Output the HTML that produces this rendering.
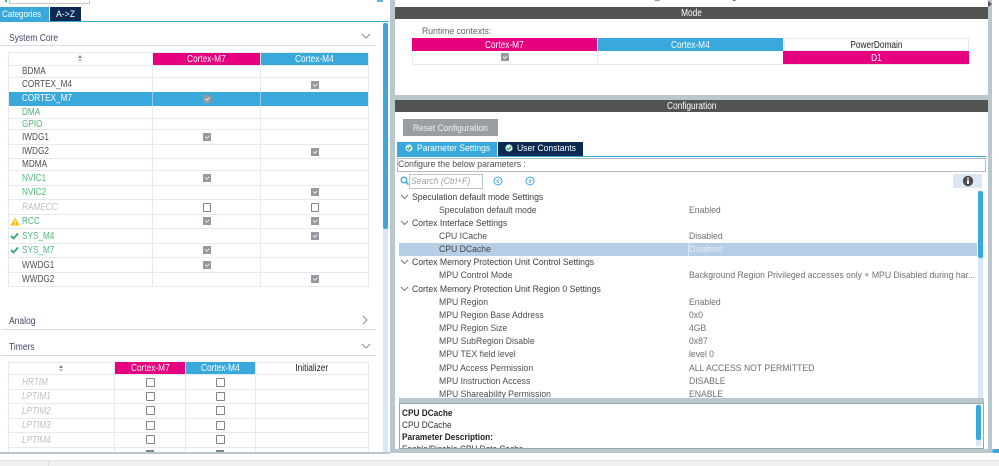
<!DOCTYPE html>
<html><head><meta charset="utf-8"><style>
html,body{margin:0;padding:0;background:#fff}
#p{position:relative;width:999px;height:466px;overflow:hidden;background:#fff;font-family:"Liberation Sans",sans-serif;font-size:10px;color:#555;filter:blur(.35px)}
#p div{position:absolute;white-space:nowrap}
.l{font-size:10px;line-height:14px;height:14px;left:22px;color:#505050;transform:scaleX(.82);transform-origin:0 50%}
.g{color:#52b878}.d{color:#bcc0c6;font-style:italic}
.hl{height:1px;background:#e4eaef}
.vl{width:1px;background:#e4eaef}
.h{color:#fff;text-align:center;font-size:10px;line-height:14px;overflow:visible}
.h span{display:inline-block;transform:scaleX(.83)}
.c{width:8px;height:8px;background:#95999e}
.c:after{content:"";position:absolute;left:2px;top:1.5px;width:3px;height:1.6px;border:solid #e8e8e8;border-width:0 0 1.2px 1.2px;transform:rotate(-45deg)}
.u{width:6.5px;height:6.5px;border:1px solid #808488;border-radius:1px;background:#fff}
.s{font-size:9.5px;line-height:14px;color:#4e4e4e;transform:scaleX(.91);transform-origin:0 50%}
.t{color:#3c4044;left:412px}.k{left:439px}.v{left:689px;color:#707070}
.sec{font-size:10px;line-height:14px;color:#434a6c;left:9px;transform:scaleX(.85);transform-origin:0 50%}
.rule{left:1px;width:375px;height:1px;background:#d5dbe0}
</style></head><body><div id="p">

<div style="left:5px;top:0;width:2px;height:2px;background:#39a9dc"></div>
<div style="left:9px;top:-3px;width:79px;height:5px;border:1px solid #c8c8c8"></div>
<div style="left:377px;top:0;width:6px;height:2px;background:#6aaedb"></div>
<div style="left:0;top:7px;width:49px;height:14px;background:#39a9dc"></div>
<div class="s" style="left:2px;top:8px;color:#fff;transform:scaleX(.85)">Categories</div>
<div style="left:50px;top:7px;width:31px;height:14px;background:#0b2a52"></div>
<div class="s" style="left:56px;top:8px;color:#fff">A-&gt;Z</div>
<div style="left:0;top:21px;width:389px;height:1px;background:#39a9dc"></div>

<div style="left:383px;top:23px;width:5px;height:429px;background:#d9e8f6"></div>
<div style="left:383px;top:23px;width:5px;height:206px;background:#39a9dc;border-radius:2px"></div>

<div class="sec" style="top:32px">System Core</div>
<div class="rule" style="top:45px"></div>
<svg style="position:absolute;left:361px;top:33px" width="10" height="6"><path d="M1 1L5 5L9 1" fill="none" stroke="#8a8f94"/></svg>

<div class="vl" style="left:8px;top:53px;height:234px"></div>
<div class="vl" style="left:152px;top:53px;height:234px"></div>
<div class="vl" style="left:260px;top:53px;height:234px"></div>
<div class="vl" style="left:368px;top:53px;height:234px"></div>
<div class="hl" style="left:8px;top:52px;width:361px"></div>
<div class="hl" style="left:8px;top:65px;width:361px"></div>
<div class="hl" style="left:8px;top:77px;width:361px"></div>
<div class="hl" style="left:8px;top:105px;width:361px"></div>
<div class="hl" style="left:8px;top:118px;width:361px"></div>
<div class="hl" style="left:8px;top:129px;width:361px"></div>
<div class="hl" style="left:8px;top:144px;width:361px"></div>
<div class="hl" style="left:8px;top:158px;width:361px"></div>
<div class="hl" style="left:8px;top:170px;width:361px"></div>
<div class="hl" style="left:8px;top:185px;width:361px"></div>
<div class="hl" style="left:8px;top:199px;width:361px"></div>
<div class="hl" style="left:8px;top:214px;width:361px"></div>
<div class="hl" style="left:8px;top:228px;width:361px"></div>
<div class="hl" style="left:8px;top:243px;width:361px"></div>
<div class="hl" style="left:8px;top:257px;width:361px"></div>
<div class="hl" style="left:8px;top:272px;width:361px"></div>
<div class="hl" style="left:8px;top:286px;width:361px"></div>

<div class="h" style="left:153px;top:53px;width:107px;height:12px;background:#e6007e"><span>Cortex-M7</span></div>
<div class="h" style="left:261px;top:53px;width:107px;height:12px;background:#39a9dc"><span>Cortex-M4</span></div>
<div style="left:78px;top:55px;width:0;height:0;border:2.5px solid transparent;border-top:0;border-bottom:3px solid #888"></div>
<div style="left:78px;top:59px;width:0;height:0;border:2.5px solid transparent;border-bottom:0;border-top:3px solid #bbb"></div>

<div style="left:9px;top:92px;width:359px;height:14px;background:#39a9dc"></div>
<div class="vl" style="left:152px;top:92px;height:14px;background:#8fcbea"></div>
<div class="vl" style="left:260px;top:92px;height:14px;background:#8fcbea"></div>

<div class="l" style="top:65px">BDMA</div>
<div class="l" style="top:78px">CORTEX_M4</div>
<div class="l" style="top:92px;color:#fff">CORTEX_M7</div>
<div class="l g" style="top:106px">DMA</div>
<div class="l g" style="top:118px">GPIO</div>
<div class="l" style="top:131px">IWDG1</div>
<div class="l" style="top:145px">IWDG2</div>
<div class="l" style="top:158px">MDMA</div>
<div class="l g" style="top:172px">NVIC1</div>
<div class="l g" style="top:186px">NVIC2</div>
<div class="l d" style="top:201px">RAMECC</div>
<div class="l g" style="top:215px">RCC</div>
<div class="l g" style="top:230px">SYS_M4</div>
<div class="l g" style="top:244px">SYS_M7</div>
<div class="l" style="top:259px">WWDG1</div>
<div class="l" style="top:273px">WWDG2</div>

<svg style="position:absolute;left:10px;top:217px" width="10" height="9"><path d="M5 0.5L9.5 8.5H0.5Z" fill="#f7c000"/><rect x="4.5" y="3" width="1" height="3" fill="#fff"/><rect x="4.5" y="6.6" width="1" height="1" fill="#fff"/></svg>
<svg style="position:absolute;left:10px;top:232px" width="9" height="8"><path d="M1 4L3.5 6.5L8 1.5" fill="none" stroke="#2ea36a" stroke-width="1.7"/></svg>
<svg style="position:absolute;left:10px;top:246px" width="9" height="8"><path d="M1 4L3.5 6.5L8 1.5" fill="none" stroke="#2ea36a" stroke-width="1.7"/></svg>

<div class="c" style="left:311px;top:81px"></div>
<div class="c" style="left:203px;top:95px"></div>
<div class="c" style="left:203px;top:133px"></div>
<div class="c" style="left:311px;top:148px"></div>
<div class="c" style="left:203px;top:174px"></div>
<div class="c" style="left:311px;top:188px"></div>
<div class="u" style="left:202.5px;top:203px"></div>
<div class="u" style="left:310.5px;top:203px"></div>
<div class="c" style="left:203px;top:217px"></div>
<div class="c" style="left:311px;top:217px"></div>
<div class="c" style="left:311px;top:232px"></div>
<div class="c" style="left:203px;top:246px"></div>
<div class="c" style="left:203px;top:261px"></div>
<div class="c" style="left:311px;top:275px"></div>

<div class="sec" style="top:315px">Analog</div>
<div class="rule" style="top:329px"></div>
<svg style="position:absolute;left:362px;top:315px" width="6" height="10"><path d="M1 1L5 5L1 9" fill="none" stroke="#8a8f94"/></svg>
<div class="sec" style="top:341px">Timers</div>
<div class="rule" style="top:355px"></div>
<svg style="position:absolute;left:361px;top:343px" width="10" height="6"><path d="M1 1L5 5L9 1" fill="none" stroke="#8a8f94"/></svg>

<div class="vl" style="left:8px;top:362px;height:90px"></div>
<div class="vl" style="left:114px;top:362px;height:90px"></div>
<div class="vl" style="left:185px;top:362px;height:90px"></div>
<div class="vl" style="left:255px;top:362px;height:90px"></div>
<div class="vl" style="left:368px;top:362px;height:90px"></div>
<div class="hl" style="left:8px;top:362px;width:361px"></div>
<div class="hl" style="left:8px;top:374px;width:361px"></div>
<div class="hl" style="left:8px;top:389px;width:361px"></div>
<div class="hl" style="left:8px;top:403px;width:361px"></div>
<div class="hl" style="left:8px;top:418px;width:361px"></div>
<div class="hl" style="left:8px;top:432px;width:361px"></div>
<div class="hl" style="left:8px;top:447px;width:361px"></div>
<div class="h" style="left:115px;top:362px;width:70px;height:12px;background:#e6007e"><span>Cortex-M7</span></div>
<div class="h" style="left:186px;top:362px;width:69px;height:12px;background:#39a9dc"><span>Cortex-M4</span></div>
<div class="h" style="left:256px;top:362px;width:112px;height:12px;color:#222"><span>Initializer</span></div>
<div style="left:59px;top:365px;width:0;height:0;border:2.5px solid transparent;border-top:0;border-bottom:3px solid #888"></div>
<div style="left:59px;top:369px;width:0;height:0;border:2.5px solid transparent;border-bottom:0;border-top:3px solid #bbb"></div>

<div class="l d" style="top:376px">HRTIM</div>
<div class="l d" style="top:390px">LPTIM1</div>
<div class="l d" style="top:405px">LPTIM2</div>
<div class="l d" style="top:419px">LPTIM3</div>
<div class="l d" style="top:434px">LPTIM4</div>
<div class="u" style="left:146px;top:378px"></div><div class="u" style="left:216px;top:378px"></div>
<div class="u" style="left:146px;top:392px"></div><div class="u" style="left:216px;top:392px"></div>
<div class="u" style="left:146px;top:406px"></div><div class="u" style="left:216px;top:406px"></div>
<div class="u" style="left:146px;top:421px"></div><div class="u" style="left:216px;top:421px"></div>
<div class="u" style="left:146px;top:435px"></div><div class="u" style="left:216px;top:435px"></div>
<div style="left:146px;top:450px;width:8px;height:2px;background:#808488"></div><div style="left:216px;top:450px;width:8px;height:2px;background:#808488"></div>

<div style="left:390px;top:0;width:5px;height:453px;background:#b9c7ce"></div>
<div style="left:988px;top:0;width:4px;height:453px;background:#b9c7ce"></div>
<div style="left:988px;top:1px;width:0;height:0;border-left:4px solid #555;border-top:3px solid transparent;border-bottom:3px solid transparent"></div>
<div style="left:992px;top:449px;width:7px;height:4px;background:#39a9dc;border-radius:2px 0 0 2px"></div>

<div class="h" style="left:395px;top:-8px;width:593px;line-height:10px;color:#444"><span>CORTEX_M7 Mode and Configuration</span></div>
<div class="h" style="left:395px;top:7px;width:593px;height:12px;background:#525452"><span>Mode</span></div>

<div class="s" style="left:422px;top:25px;color:#666">Runtime contexts:</div>
<div class="h" style="left:412px;top:38px;width:185px;height:13px;line-height:15px;background:#e6007e"><span>Cortex-M7</span></div>
<div class="h" style="left:598px;top:38px;width:185px;height:13px;line-height:15px;background:#39a9dc"><span>Cortex-M4</span></div>
<div class="h" style="left:784px;top:38px;width:185px;height:13px;line-height:13px;color:#222;box-sizing:border-box;border:1px solid #e4eaef"><span>PowerDomain</span></div>
<div style="left:412px;top:51px;width:557px;height:13px;border-bottom:1px solid #e4eaef"></div>
<div class="vl" style="left:412px;top:51px;height:13px"></div>
<div class="vl" style="left:597px;top:51px;height:13px"></div>
<div class="c" style="left:501px;top:53px"></div>
<div class="h" style="left:783px;top:51px;width:186px;height:13px;line-height:15px;background:#e6007e"><span>D1</span></div>

<div style="left:395px;top:95px;width:593px;height:5px;background:#b9c7ce"></div>
<div class="h" style="left:395px;top:100px;width:593px;height:12px;background:#525452"><span>Configuration</span></div>

<div style="left:403px;top:119px;width:95px;height:17px;background:#9a9ea2"></div>
<div class="s" style="left:413px;top:122px;color:#f0f0f0;transform:scaleX(.89)">Reset Configuration</div>

<div style="left:397px;top:142px;width:100px;height:14px;background:#39a9dc"></div>
<div class="s" style="left:417px;top:142px;color:#fff;transform:scaleX(.9)">Parameter Settings</div>
<div style="left:498px;top:142px;width:85px;height:14px;background:#0b2a52"></div>
<div class="s" style="left:517px;top:142px;color:#fff;transform:scaleX(.9)">User Constants</div>
<svg style="position:absolute;left:405px;top:144px" width="9" height="9"><circle cx="4" cy="4" r="3.6" fill="#d8efe4"/><path d="M2 4L3.6 5.6L6 2.6" fill="none" stroke="#2ea36a" stroke-width="1.2"/></svg>
<svg style="position:absolute;left:505px;top:144px" width="9" height="9"><circle cx="4" cy="4" r="3.6" fill="#d8efe4"/><path d="M2 4L3.6 5.6L6 2.6" fill="none" stroke="#2ea36a" stroke-width="1.2"/></svg>
<div style="left:397px;top:156px;width:589px;height:1px;background:#39a9dc"></div>
<div style="left:397px;top:158px;width:587px;height:12px;border:1px solid #b5bcc2"></div>
<div class="s" style="left:398px;top:158px">Configure the below parameters :</div>

<svg style="position:absolute;left:400px;top:176px" width="9" height="10"><circle cx="4" cy="4" r="2.8" fill="none" stroke="#39a9dc" stroke-width="1.3"/><path d="M6 6L8.4 8.6" stroke="#39a9dc" stroke-width="1.4"/></svg>
<div style="left:409px;top:174px;width:72px;height:13px;border:1px solid #c0c4c8"></div>
<div class="s" style="left:411px;top:175px;font-style:italic;color:#9ba0a6">Search (Ctrl+F)</div>
<svg style="position:absolute;left:493px;top:176px" width="10" height="10"><circle cx="5" cy="5" r="4" fill="none" stroke="#39a9dc"/><path d="M5.8 3.2L4 5L5.8 6.8" fill="none" stroke="#39a9dc"/></svg>
<svg style="position:absolute;left:525px;top:176px" width="10" height="10"><circle cx="5" cy="5" r="4" fill="none" stroke="#39a9dc"/><path d="M4.2 3.2L6 5L4.2 6.8" fill="none" stroke="#39a9dc"/></svg>

<div style="left:953px;top:174px;width:29px;height:14px;background:#dbe8f4"></div>
<svg style="position:absolute;left:962px;top:175px" width="12" height="12"><circle cx="6" cy="6" r="5.2" fill="#4a4a4a"/><rect x="5" y="5" width="2" height="4" fill="#e8eef4"/><rect x="5" y="2.6" width="2" height="1.6" fill="#e8eef4"/></svg>

<div style="left:978px;top:191px;width:5px;height:207px;background:#d9e8f6"></div>
<div style="left:978px;top:191px;width:5px;height:67px;background:#39a9dc;border-radius:2px"></div>

<div style="left:399px;top:243px;width:578px;height:13px;background:#b5cde5"></div>
<div style="left:688px;top:243px;width:1px;height:13px;background:#dce7f2"></div>

<svg style="position:absolute;left:400px;top:194px" width="9" height="6"><path d="M1 1L4.5 4.5L8 1" fill="none" stroke="#777"/></svg>
<svg style="position:absolute;left:400px;top:220px" width="9" height="6"><path d="M1 1L4.5 4.5L8 1" fill="none" stroke="#777"/></svg>
<svg style="position:absolute;left:400px;top:259px" width="9" height="6"><path d="M1 1L4.5 4.5L8 1" fill="none" stroke="#777"/></svg>
<svg style="position:absolute;left:400px;top:286px" width="9" height="6"><path d="M1 1L4.5 4.5L8 1" fill="none" stroke="#777"/></svg>

<div class="s t" style="top:191px">Speculation default mode Settings</div>
<div class="s k" style="top:204px">Speculation default mode</div><div class="s v" style="top:204px">Enabled</div>
<div class="s t" style="top:217px">Cortex Interface Settings</div>
<div class="s k" style="top:230px">CPU ICache</div><div class="s v" style="top:230px">Disabled</div>
<div class="s k" style="top:243px;color:#444">CPU DCache</div><div class="s v" style="top:243px;color:#e4edf6">Disabled</div>
<div class="s t" style="top:256px">Cortex Memory Protection Unit Control Settings</div>
<div class="s k" style="top:269px">MPU Control Mode</div><div class="s v" style="top:269px">Background Region Privileged accesses only + MPU Disabled during har...</div>
<div class="s t" style="top:283px">Cortex Memory Protection Unit Region 0 Settings</div>
<div class="s k" style="top:296px">MPU Region</div><div class="s v" style="top:296px">Enabled</div>
<div class="s k" style="top:309px">MPU Region Base Address</div><div class="s v" style="top:309px">0x0</div>
<div class="s k" style="top:322px">MPU Region Size</div><div class="s v" style="top:322px">4GB</div>
<div class="s k" style="top:335px">MPU SubRegion Disable</div><div class="s v" style="top:335px">0x87</div>
<div class="s k" style="top:348px">MPU TEX field level</div><div class="s v" style="top:348px">level 0</div>
<div class="s k" style="top:362px">MPU Access Permission</div><div class="s v" style="top:362px">ALL ACCESS NOT PERMITTED</div>
<div class="s k" style="top:375px">MPU Instruction Access</div><div class="s v" style="top:375px">DISABLE</div>
<div class="s k" style="top:388px">MPU Shareability Permission</div><div class="s v" style="top:388px">ENABLE</div>

<div style="left:399px;top:398px;width:585px;height:6px;background:#b9c7ce"></div>
<div style="left:399px;top:403px;width:583px;height:44px;border:1px solid #9aa5ad;background:#fff;overflow:hidden">
<div class="s" style="left:2px;top:3px;font-weight:bold;color:#222;transform:scaleX(.87)">CPU DCache</div>
<div class="s" style="left:2px;top:15px;color:#333;transform:scaleX(.87)">CPU DCache</div>
<div class="s" style="left:2px;top:27px;font-weight:bold;color:#222;transform:scaleX(.87)">Parameter Description:</div>
<div class="s" style="left:2px;top:39px;color:#333;transform:scaleX(.87)">Enable/Disable CPU Data Cache</div>
</div>
<div style="left:976px;top:405px;width:5px;height:41px;background:#d9e8f6"></div>
<div style="left:976px;top:405px;width:5px;height:35px;background:#39a9dc;border-radius:2px"></div>
<div style="left:395px;top:449px;width:593px;height:4px;background:#b9c7ce"></div>

<div style="left:0;top:452px;width:390px;height:2px;background:#b9c7ce"></div>
<div style="left:0;top:460px;width:999px;height:6px;background:#f0f0f0;border-top:1px solid #e2e2e2;box-sizing:border-box"></div>
<div style="left:48px;top:461px;width:1px;height:5px;background:#dcdcdc"></div>
</div></body></html>
